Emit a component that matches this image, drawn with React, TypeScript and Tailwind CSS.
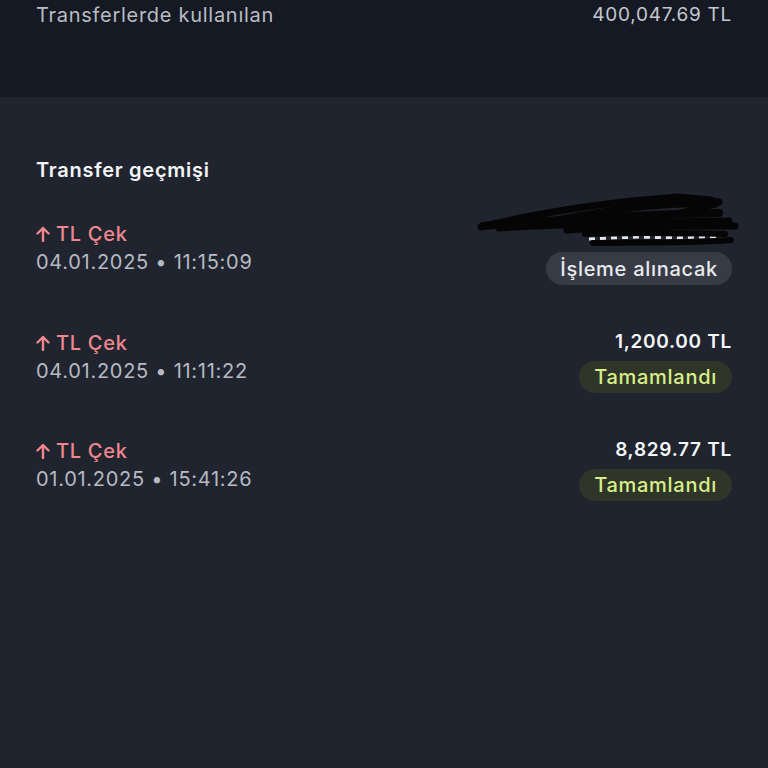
import React from "react";

type Row = {
  date: string;
  amount?: string;
  status: "pending" | "done";
};

const rows: Row[] = [
  { date: "04.01.2025 • 11:15:09", status: "pending" },
  { date: "04.01.2025 • 11:11:22", amount: "1,200.00 TL", status: "done" },
  { date: "01.01.2025 • 15:41:26", amount: "8,829.77 TL", status: "done" },
];

function Scribble() {
  return (
    <svg
      className="absolute right-[-9px] top-[-28px]"
      width="264"
      height="60"
      viewBox="0 0 264 60"
      fill="none"
    >
      <path
        d="M112 48 L160 46 L200 47 L244 46"
        stroke="#e5e7eb"
        strokeWidth="3"
        strokeDasharray="6 5"
      />
      <g stroke="#050505" strokeLinecap="round" strokeLinejoin="round">
        <path d="M4 36 C60 22 120 12 200 6 L234 9" strokeWidth="7" />
        <path d="M6 35 C70 30 140 24 242 22" strokeWidth="8" />
        <path d="M22 37 C90 33 170 31 252 30" strokeWidth="7" />
        <path d="M60 33 C120 20 180 11 238 13" strokeWidth="7" />
        <path d="M90 39 C150 35 210 35 258 35" strokeWidth="7" />
        <path d="M108 43 C160 41 210 42 248 43" strokeWidth="6" />
        <path d="M116 52 C170 51 220 52 254 49" strokeWidth="6" />
        <path d="M140 16 C180 9 215 6 242 11 C222 20 190 25 150 30" strokeWidth="7" />
      </g>
    </svg>
  );
}

function Badge({ status }: { status: Row["status"] }) {
  if (status === "pending") {
    return (
      <span className="mt-[5px] inline-flex h-[33px] items-center rounded-full bg-[#373b46] px-[14px] text-[20px] font-medium text-[#e8e9ec]">
        İşleme alınacak
      </span>
    );
  }
  return (
    <span className="mt-[5px] inline-flex h-[32px] items-center rounded-full bg-[#2f3528] px-[15px] text-[20px] font-medium text-[#d8ee88]">
      Tamamlandı
    </span>
  );
}

export default function App() {
  return (
    <div
      className="flex h-[768px] w-[768px] flex-col overflow-hidden bg-[#20242f] tracking-[0.045em]"
      style={{ fontFamily: "Inter, 'Noto Sans', sans-serif" }}
    >
      <div className="flex h-[97px] shrink-0 items-start justify-between bg-[#141923] px-[36px] pt-[2px]">
        <span className="text-[20px] leading-[26px] text-[#b9bcc3]">Transferlerde kullanılan</span>
        <span className="text-[19px] leading-[26px] text-[#c4c7cd]">400,047.69 TL</span>
      </div>

      <div className="flex flex-col px-[36px] pt-[60px]">
        <h2 className="text-[20px] font-semibold leading-[26px] text-[#f3f4f6]">Transfer geçmişi</h2>

        <div className="mt-[36px] flex flex-col gap-[43px]">
          {rows.map((r, i) => (
            <div key={i} className="flex items-start justify-between">
              <div className="mt-[1px] flex flex-col">
                <span className="flex items-center gap-[6px] text-[20px] font-medium leading-[28px] text-[#f0878e]">
                  <svg width="14" height="16" viewBox="0 0 14 16" fill="none">
                    <path
                      d="M7 15V2M1.5 7.5L7 2l5.5 5.5"
                      stroke="#f0878e"
                      strokeWidth="2.4"
                      strokeLinecap="round"
                      strokeLinejoin="round"
                    />
                  </svg>
                  TL Çek
                </span>
                <span className="text-[20px] leading-[28px] text-[#b7bac2]">{r.date}</span>
              </div>
              <div className="flex flex-col items-end">
                <span className="relative h-[28px] text-[19px] font-semibold leading-[28px] text-[#f5f6f7]">
                  {r.amount ?? ""}
                  {!r.amount && <Scribble />}
                </span>
                <Badge status={r.status} />
              </div>
            </div>
          ))}
        </div>
      </div>
    </div>
  );
}
